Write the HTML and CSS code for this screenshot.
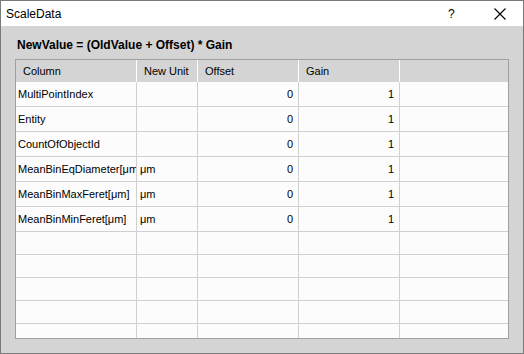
FILE: index.html
```html
<!DOCTYPE html>
<html lang="en">
<head>
<meta charset="UTF-8">
<title>ScaleData</title>
<link rel="stylesheet" href="styles.css">
</head>
<body>
<div class="window">
    <div class="titlebar">
        <span class="title">ScaleData</span>
        <span class="help">?</span>
        <span class="close">
            <svg width="12" height="12" viewBox="0 0 12 12"><path d="M0.5 0.5 L11.5 11.5 M11.5 0.5 L0.5 11.5" stroke="#000" stroke-width="1.1" fill="none"/></svg>
        </span>
    </div>
    <div class="content">
        <p class="formula">NewValue = (OldValue + Offset) * Gain</p>
        <div class="grid">
            <div class="head">Column</div>
            <div class="head">New Unit</div>
            <div class="head">Offset</div>
            <div class="head">Gain</div>
            <div class="head last"></div>

            <div class="cell name">MultiPointIndex</div>
            <div class="cell unit"></div>
            <div class="cell num">0</div>
            <div class="cell num">1</div>
            <div class="cell last"></div>

            <div class="cell name">Entity</div>
            <div class="cell unit"></div>
            <div class="cell num">0</div>
            <div class="cell num">1</div>
            <div class="cell last"></div>

            <div class="cell name">CountOfObjectId</div>
            <div class="cell unit"></div>
            <div class="cell num">0</div>
            <div class="cell num">1</div>
            <div class="cell last"></div>

            <div class="cell name">MeanBinEqDiameter[μm]</div>
            <div class="cell unit">μm</div>
            <div class="cell num">0</div>
            <div class="cell num">1</div>
            <div class="cell last"></div>

            <div class="cell name">MeanBinMaxFeret[μm]</div>
            <div class="cell unit">μm</div>
            <div class="cell num">0</div>
            <div class="cell num">1</div>
            <div class="cell last"></div>

            <div class="cell name">MeanBinMinFeret[μm]</div>
            <div class="cell unit">μm</div>
            <div class="cell num">0</div>
            <div class="cell num">1</div>
            <div class="cell last"></div>

            <div class="cell empty"></div><div class="cell empty"></div><div class="cell empty"></div><div class="cell empty"></div><div class="cell empty last"></div>
            <div class="cell empty"></div><div class="cell empty"></div><div class="cell empty"></div><div class="cell empty"></div><div class="cell empty last"></div>
            <div class="cell empty"></div><div class="cell empty"></div><div class="cell empty"></div><div class="cell empty"></div><div class="cell empty last"></div>
            <div class="cell empty"></div><div class="cell empty"></div><div class="cell empty"></div><div class="cell empty"></div><div class="cell empty last"></div>
            <div class="cell tail"></div><div class="cell tail"></div><div class="cell tail"></div><div class="cell tail"></div><div class="cell tail last"></div>
        </div>
    </div>
</div>
</body>
</html>
```

FILE: styles.css
```css
body {
    margin: 0;
    font-family: "Liberation Sans", Arial, sans-serif;
}

.window {
    width: 524px;
    height: 354px;
    box-sizing: border-box;
    border: 1px solid #7a7a7a;
    background-color: #d4d4d4;
    display: flex;
    flex-direction: column;
}

.titlebar {
    height: 25px;
    background-color: #ffffff;
    display: flex;
    align-items: center;
    font-size: 12px;
    color: #000;
}

.title {
    padding-left: 5px;
    flex: 1;
}

.help {
    width: 12px;
    margin-right: 34px;
}

.close {
    display: flex;
    margin-right: 17px;
}

.content {
    flex: 1;
    padding: 0 14px 14px 14px;
    display: flex;
    flex-direction: column;
}

.formula {
    margin: 0;
    height: 33px;
    line-height: 38px;
    padding-left: 2px;
    font-weight: bold;
    font-size: 12px;
    color: #000;
}

.grid {
    border: 1px solid #a0a0a0;
    background-color: #fcfcfc;
    display: grid;
    grid-template-columns: 121px 61px 101px 101px 1fr;
    grid-template-rows: 22px repeat(6, 25px) repeat(4, 23px) 14px;
    font-size: 11px;
    color: #000;
}

.head {
    background-color: #d4d4d4;
    border-right: 1px solid #ffffff;
    padding-left: 7px;
    line-height: 22px;
}

.cell {
    border-right: 1px solid #d0d0d0;
    border-bottom: 1px solid #d0d0d0;
    line-height: 25px;
    white-space: nowrap;
    overflow: hidden;
}

.last {
    border-right: none;
}

.tail {
    border-bottom: none;
}

.name {
    padding-left: 2px;
}

.unit {
    padding-left: 3px;
}

.num {
    text-align: right;
    padding-right: 5px;
}
```
